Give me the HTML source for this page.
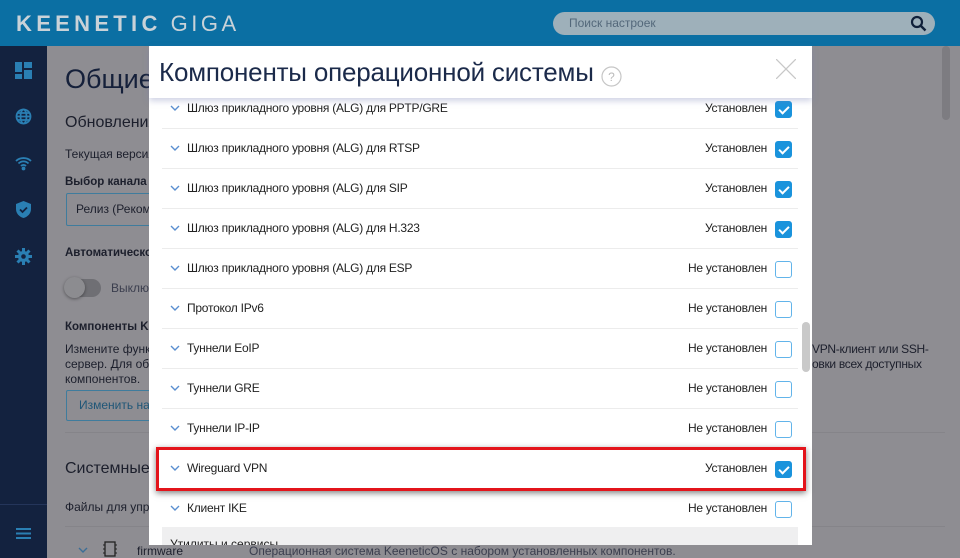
<!DOCTYPE html>
<html><head><meta charset="utf-8"><style>
*{margin:0;padding:0;box-sizing:border-box}
body{width:960px;height:558px;overflow:hidden;position:relative;font-family:"Liberation Sans",sans-serif;background:#8e8d92;color:#222}
.hdr{position:absolute;left:0;top:0;width:960px;height:46px;background:#0b6fa3}
.logo{position:absolute;left:16px;top:11px;color:#c9d2d8;font-size:22px;font-weight:bold;letter-spacing:4.3px}
.logo span{font-weight:normal;margin-left:9px;letter-spacing:3.5px}
.search{position:absolute;left:553px;top:12px;width:382px;height:23px;border-radius:12px;background:#9eb0ba;color:#53687a;font-size:12px;line-height:23px;padding-left:16px}
.side{position:absolute;left:0;top:46px;width:47px;height:512px;background:#13223f}
.ic{position:absolute;left:15px;width:17px;height:17px}
.bg{position:absolute;color:#1c1f2c}
.modal{position:absolute;left:149px;top:46px;width:663px;height:499px;background:#fff}
.mh{position:absolute;left:0;top:0;width:663px;height:52px;background:#fff;box-shadow:0 3px 6px rgba(120,130,180,.35);z-index:3}
.mh h1{position:absolute;left:10px;top:11px;font-weight:normal;font-size:26px;color:#1b2a4a;letter-spacing:-0.2px;white-space:nowrap}
.row{position:absolute;left:13px;width:636px;height:40px;border-bottom:1px solid #ececec;font-size:12px;letter-spacing:-.25px}
.row .n{position:absolute;left:25px;top:12px}
.row .c{position:absolute;left:8px;top:16px;width:10px;height:6px}
.row .s{position:absolute;right:31px;top:12px}
.row .b{position:absolute;right:6px;top:12px;width:17px;height:17px;border:1.5px solid #62b4ea;border-radius:3px}
.row .b.on{background:#1a93dc;border-color:#1a93dc}
.row .b.on:after{content:"";position:absolute;left:5px;top:2px;width:4px;height:8px;border:solid #fff;border-width:0 2px 2px 0;transform:rotate(45deg)}
</style></head><body>
<div class="hdr"><div class="logo">KEENETIC<span>GIGA</span></div>
<div class="search">Поиск настроек
<svg style="position:absolute;right:8px;top:3px" width="17" height="17" viewBox="0 0 17 17"><circle cx="7" cy="7" r="5" fill="none" stroke="#10203a" stroke-width="2.2"/><path d="M11 11l4.5 4.5" stroke="#10203a" stroke-width="2.4"/></svg></div></div>
<div class="side">
<svg class="ic" style="top:16px" viewBox="0 0 17 17" fill="#2a7fb3"><rect x="0" y="0" width="7" height="10"/><rect x="9" y="0" width="8" height="6"/><rect x="0" y="12" width="7" height="5"/><rect x="9" y="8" width="8" height="9"/></svg>
<svg class="ic" style="top:62px" viewBox="0 0 17 17" fill="none" stroke="#2a7fb3" stroke-width="1.8"><circle cx="8.5" cy="8.5" r="7"/><ellipse cx="8.5" cy="8.5" rx="3" ry="7"/><path d="M1.5 8.5h14M3 5h11M3 12h11"/></svg>
<svg class="ic" style="top:108px" viewBox="0 0 17 17" fill="none" stroke="#2a7fb3" stroke-width="1.8"><path d="M1 7a11 11 0 0 1 15 0M3.5 9.5a7 7 0 0 1 10 0M6 12a3.5 3.5 0 0 1 5 0"/><circle cx="8.5" cy="14.5" r="1" fill="#2a7fb3"/></svg>
<svg class="ic" style="top:155px" viewBox="0 0 17 17"><path d="M8.5 0L16 3v5c0 4.5-3.2 7.8-7.5 9C4.2 15.8 1 12.5 1 8V3z" fill="#2a7fb3"/><path d="M5 8.5l2.5 2.5L12 6.5" stroke="#13223f" stroke-width="1.8" fill="none"/></svg>
<svg class="ic" style="top:202px" viewBox="0 0 17 17"><circle cx="8.5" cy="8.5" r="5.5" fill="#2a7fb3"/><g stroke="#2a7fb3" stroke-width="3"><path d="M8.5 0v17M0 8.5h17M2.5 2.5l12 12M14.5 2.5l-12 12"/></g><circle cx="8.5" cy="8.5" r="2.3" fill="#13223f"/></svg>
<div style="position:absolute;left:0;top:458px;width:47px;border-top:1px solid #24355a"></div>
<svg style="position:absolute;left:16px;top:482px" width="15" height="11"><path d="M0 1h15M0 5.5h15M0 10h15" stroke="#2a7fb3" stroke-width="2"/></svg>
</div>
<div class="bg" style="left:65px;top:64px;font-size:27px;color:#15203a">Общие</div>
<div class="bg" style="left:65px;top:114px;font-size:16px">Обновления</div>
<div class="bg" style="left:65px;top:147px;font-size:12px">Текущая версия</div>
<div class="bg" style="left:65px;top:176px;font-size:11.5px;font-weight:bold">Выбор канала о</div>
<div style="position:absolute;left:66px;top:193px;width:100px;height:33px;border:1px solid #3f7c9d;border-radius:2px;font-size:12px;line-height:31px;padding-left:9px;color:#1c1f2c">Релиз (Рекоме</div>
<div class="bg" style="left:65px;top:247px;font-size:11.5px;font-weight:bold">Автоматическое</div>
<div style="position:absolute;left:66px;top:279px;width:35px;height:18px;border-radius:9px;background:#6f6f74"></div>
<div style="position:absolute;left:64px;top:277px;width:21px;height:21px;border-radius:50%;background:#8c8c90;box-shadow:0 1px 3px rgba(0,0,0,.4)"></div>
<div class="bg" style="left:111px;top:281px;font-size:12px;color:#3b3e4e">Выклю</div>
<div class="bg" style="left:65px;top:321px;font-size:11.5px;font-weight:bold">Компоненты Ke</div>
<div class="bg" style="left:65px;top:342px;font-size:12px;line-height:15px">Измените функ<br>сервер. Для обн<br>компонентов.</div>
<div class="bg" style="left:812px;top:342px;font-size:12px;line-height:15px;letter-spacing:-.3px">VPN-клиент или SSH-<br>овки всех доступных</div>
<div style="position:absolute;left:66px;top:390px;width:100px;height:31px;border:1px solid #3f7c9d;border-radius:2px;font-size:12px;line-height:29px;padding-left:12px;color:#1f5677">Изменить наб</div>
<div style="position:absolute;left:65px;top:432px;width:880px;border-top:1px solid #858489"></div>
<div class="bg" style="left:65px;top:460px;font-size:16px">Системные ф</div>
<div class="bg" style="left:65px;top:500px;font-size:12px">Файлы для упра</div>
<div style="position:absolute;left:65px;top:526px;width:880px;border-top:1px solid #858489"></div>
<svg style="position:absolute;left:78px;top:547px" width="10" height="6"><path d="M1 1l4 4 4-4" fill="none" stroke="#3c6e96" stroke-width="1.4"/></svg>
<svg style="position:absolute;left:102px;top:540px" width="16" height="18"><rect x="3" y="2" width="10" height="14" fill="none" stroke="#222" stroke-width="1.3"/><path d="M1 5h2M1 9h2M1 13h2M13 5h2M13 9h2M13 13h2" stroke="#222"/></svg>
<div class="bg" style="left:137px;top:544px;font-size:12px">firmware</div>
<div class="bg" style="left:249px;top:544px;font-size:12px;color:#3b3e4e">Операционная система KeeneticOS с набором установленных компонентов.</div>
<div style="position:absolute;left:942px;top:46px;width:8px;height:74px;border-radius:4px;background:#7d7c81"></div>

<div class="modal">
<div class="mh"><h1>Компоненты операционной системы</h1>
<svg style="position:absolute;left:452px;top:20px" width="21" height="21"><circle cx="10.5" cy="10.5" r="9.5" fill="none" stroke="#c6c6c6" stroke-width="1.2"/><text x="10.5" y="15" text-anchor="middle" font-size="12" fill="#bbb" font-family="Liberation Sans">?</text></svg>
<svg style="position:absolute;left:627px;top:13px" width="20" height="20"><path d="M0 0L20 20M20 0L0 20" stroke="#c8c8c8" stroke-width="1.3"/></svg>
</div>
<div style="position:absolute;left:0;top:52px;width:663px;height:447px;overflow:hidden">
<div class="row" style="top:-9px"><svg class="c"><path d="M1 1l4 4 4-4" fill="none" stroke="#5a8fd0" stroke-width="1.4"/></svg><span class="n">Шлюз прикладного уровня (ALG) для PPTP/GRE</span><span class="s">Установлен</span><span class="b on"></span></div>
<div class="row" style="top:31px"><svg class="c"><path d="M1 1l4 4 4-4" fill="none" stroke="#5a8fd0" stroke-width="1.4"/></svg><span class="n">Шлюз прикладного уровня (ALG) для RTSP</span><span class="s">Установлен</span><span class="b on"></span></div>
<div class="row" style="top:71px"><svg class="c"><path d="M1 1l4 4 4-4" fill="none" stroke="#5a8fd0" stroke-width="1.4"/></svg><span class="n">Шлюз прикладного уровня (ALG) для SIP</span><span class="s">Установлен</span><span class="b on"></span></div>
<div class="row" style="top:111px"><svg class="c"><path d="M1 1l4 4 4-4" fill="none" stroke="#5a8fd0" stroke-width="1.4"/></svg><span class="n">Шлюз прикладного уровня (ALG) для H.323</span><span class="s">Установлен</span><span class="b on"></span></div>
<div class="row" style="top:151px"><svg class="c"><path d="M1 1l4 4 4-4" fill="none" stroke="#5a8fd0" stroke-width="1.4"/></svg><span class="n">Шлюз прикладного уровня (ALG) для ESP</span><span class="s">Не установлен</span><span class="b"></span></div>
<div class="row" style="top:191px"><svg class="c"><path d="M1 1l4 4 4-4" fill="none" stroke="#5a8fd0" stroke-width="1.4"/></svg><span class="n">Протокол IPv6</span><span class="s">Не установлен</span><span class="b"></span></div>
<div class="row" style="top:231px"><svg class="c"><path d="M1 1l4 4 4-4" fill="none" stroke="#5a8fd0" stroke-width="1.4"/></svg><span class="n">Туннели EoIP</span><span class="s">Не установлен</span><span class="b"></span></div>
<div class="row" style="top:271px"><svg class="c"><path d="M1 1l4 4 4-4" fill="none" stroke="#5a8fd0" stroke-width="1.4"/></svg><span class="n">Туннели GRE</span><span class="s">Не установлен</span><span class="b"></span></div>
<div class="row" style="top:311px"><svg class="c"><path d="M1 1l4 4 4-4" fill="none" stroke="#5a8fd0" stroke-width="1.4"/></svg><span class="n">Туннели IP-IP</span><span class="s">Не установлен</span><span class="b"></span></div>
<div class="row" style="top:351px;border-bottom:none"><svg class="c"><path d="M1 1l4 4 4-4" fill="none" stroke="#5a8fd0" stroke-width="1.4"/></svg><span class="n">Wireguard VPN</span><span class="s">Установлен</span><span class="b on"></span></div>
<div class="row" style="top:391px;border-bottom:none"><svg class="c"><path d="M1 1l4 4 4-4" fill="none" stroke="#5a8fd0" stroke-width="1.4"/></svg><span class="n">Клиент IKE</span><span class="s">Не установлен</span><span class="b"></span></div>
<div style="position:absolute;left:13px;top:429px;width:636px;height:30px;background:#efeff0;font-size:12px;padding:10px 0 0 8px">Утилиты и сервисы</div>
<div style="position:absolute;left:653px;top:224px;width:8px;height:50px;border-radius:4px;background:#c9c9c9"></div>
</div>
</div>
<div style="position:absolute;left:156px;top:447px;width:650px;height:44px;border:3px solid #e3141b;box-shadow:0 2px 6px rgba(0,0,0,.5)"></div>
</body></html>
